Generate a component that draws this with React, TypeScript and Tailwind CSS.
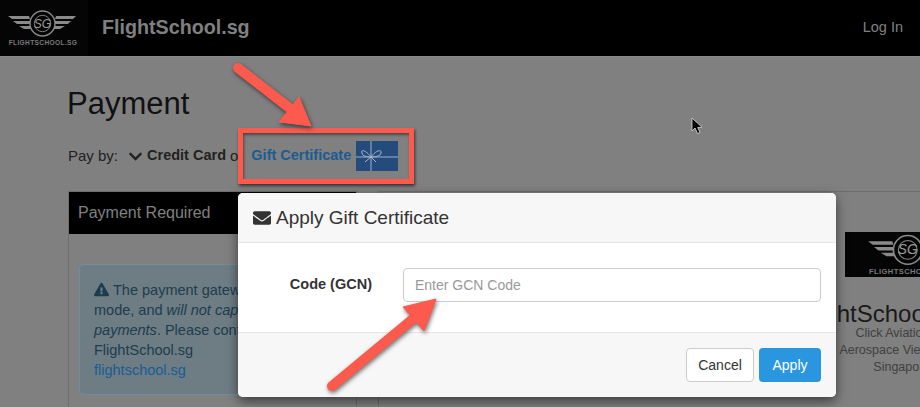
import { FaChevronDown, FaEnvelope, FaExclamationTriangle } from 'react-icons/fa';

function Logo({ className }: { className?: string }) {
  return (
    <svg viewBox="0 7 88 39" className={className}>
      <g fill="#8a8a8a">
        <path d="M8 15 H29 L30 18 H12 Z" />
        <path d="M13 20 H30 L30.5 23 H17 Z" />
        <path d="M19 25 H31 L33 28 H24 Z" />
        <path d="M76 15 H56 L55 18 H73 Z" />
        <path d="M71 20 H55 L54.5 23 H68 Z" />
        <path d="M65 25 H54 L52 28 H60 Z" />
      </g>
      <circle cx="42.5" cy="22.5" r="12.5" fill="#050505" stroke="#8a8a8a" strokeWidth="1.4" />
      <circle cx="42.5" cy="22.5" r="8.2" fill="none" stroke="#8a8a8a" strokeWidth="0.9" />
      <text x="42.5" y="26.5" textAnchor="middle" fontSize="12" fontStyle="italic" fill="#9a9a9a" fontFamily="Liberation Sans, sans-serif">SG</text>
      <text x="43" y="43.5" textAnchor="middle" fontSize="6.6" fontWeight="700" letterSpacing="0.35" fill="#7a7a7a" fontFamily="Liberation Sans, sans-serif">FLIGHTSCHOOL.SG</text>
    </svg>
  );
}

function GiftImage() {
  return (
    <svg viewBox="0 0 42 30" className="w-[42px] h-[30px] shrink-0">
      <rect width="42" height="30" fill="#254a7c" />
      <path d="M15 0 V30 M0 16 H42" stroke="#9fb0c8" strokeWidth="1" />
      <path d="M15 16 C10 9 4 8 6 12 C6 15 11 16 15 16 C20 9 26 8 25 12 C25 15 19 16 15 16 M15 16 L9 21 M15 16 L20 21" fill="none" stroke="#a9b4c4" strokeWidth="1" />
    </svg>
  );
}

function Annotations() {
  return (
    <>
      <div className="absolute left-[238px] top-[128px] w-[176px] h-[56px] border-[5px] border-[#fb5a4c] shadow-[1px_2px_3px_rgba(0,0,0,0.6),inset_1px_2px_3px_rgba(0,0,0,0.45)]" />
      <svg viewBox="0 0 920 407" className="absolute left-0 top-0 w-[920px] h-[407px] pointer-events-none drop-shadow-[1px_2px_2px_rgba(0,0,0,0.55)]">
        <g fill="#fb5a4c" stroke="#fb5a4c" strokeLinejoin="round">
          <path d="M238 68 L292 110" strokeWidth="10" strokeLinecap="round" fill="none" />
          <path d="M311 126 L299 97 L279 122 Z" strokeWidth="1" />
          <path d="M332 386 L414 318" strokeWidth="10" strokeLinecap="round" fill="none" />
          <path d="M436 299 L403 307 L424 331 Z" strokeWidth="1" />
        </g>
      </svg>
      <svg viewBox="0 0 12 17" className="absolute left-[691px] top-[117px] w-[12px] h-[17px]">
        <path d="M1 1 V14 L4 11 L6.5 16.5 L9 15.5 L6.7 10.5 L11 10.2 Z" fill="#000" stroke="#ddd" strokeWidth="0.8" />
      </svg>
    </>
  );
}

function GiftModal() {
  return (
    <div className="absolute left-[238px] top-[193px] w-[598px] h-[204px] flex flex-col rounded-[5px] overflow-hidden bg-white shadow-[0_4px_12px_rgba(0,0,0,0.55)]">
      <div className="h-[50px] shrink-0 flex items-center gap-[5px] pl-[15px] bg-[#f7f7f7] border-b border-[#e5e5e5] text-[#333]">
        <FaEnvelope className="w-[18px] h-[18px]" />
        <h4 className="text-[19px] leading-none">Apply Gift Certificate</h4>
      </div>
      <div className="flex-1 flex items-center px-[15px] pb-[5px]">
        <label className="w-[119px] text-right text-[14.5px] font-bold text-[#333]">Code (GCN)</label>
        <input
          placeholder="Enter GCN Code"
          className="ml-[31px] w-[418px] h-[34px] px-[11px] rounded-[4px] border border-[#ccc] bg-white text-[14px] placeholder:text-[#999] outline-none"
        />
      </div>
      <div className="h-[65px] shrink-0 flex items-center justify-end gap-[5px] pr-[15px] bg-[#f7f7f7] border-t border-[#e5e5e5]">
        <button className="w-[68px] h-[34px] rounded-[4px] border border-[#ccc] bg-white text-[14px] text-[#333]">Cancel</button>
        <button className="w-[62px] h-[34px] rounded-[4px] bg-[#2b96e0] text-[14px] text-white">Apply</button>
      </div>
    </div>
  );
}

export default function App() {
  return (
    <div className="relative w-[920px] h-[407px] overflow-hidden bg-[#808080] font-['Liberation_Sans',Arial,sans-serif]">
      {/* Navbar */}
      <nav className="h-[57px] flex items-center bg-black border-b border-[#8a8a8a] text-[#808080]">
        <div className="w-[88px] h-[56px] flex items-center bg-[#050505]">
          <Logo className="w-[88px] h-[39px] -mt-[2px]" />
        </div>
        <a className="ml-[14px] text-[19.7px] font-bold">FlightSchool.sg</a>
        <a className="ml-auto mr-[17px] text-[14.5px]">Log In</a>
      </nav>

      <main className="pl-[68px]">
        <h1 className="mt-[30px] -ml-[1px] text-[31px] leading-[33px] font-medium text-[#111]">Payment</h1>
        <div className="mt-[24px] h-[24px] flex items-center text-[15px] text-[#222] whitespace-nowrap">
          <span>Pay by:</span>
          <FaChevronDown className="ml-[10px] mr-[4px] w-[15px] h-[15px]" />
          <b className="text-[14.5px]">Credit Card</b>
          <span className="ml-1">or</span>
          <a className="ml-[8px] mr-[5px] text-[14.5px] font-bold text-[#1a5c92]">Gift Certificate</a>
          <GiftImage />
        </div>

        <div className="mt-[23px] flex gap-[21px] w-[880px]">
          {/* Left panel */}
          <section className="w-[289px] shrink-0 h-[300px] border border-[#6e6e6e]">
            <div className="h-[42px] flex items-center pl-[9px] bg-black text-[#808080] text-[16px]">Payment Required</div>
            <div className="mt-[30px] mx-[10px] h-[131px] px-[14px] pt-[15px] rounded-[4px] border border-[#6f8d9c] bg-[#6e7d84] text-[14.5px] leading-[20px] text-[#1d3c4e] whitespace-nowrap overflow-hidden">
              <FaExclamationTriangle className="inline-block w-[15px] h-[15px] mr-[4px] -mt-[3px]" />
              The payment gateway is in test
              <br />
              mode, and <i>will not capture</i>
              <br />
              <i>payments</i>. Please contact
              <br />
              FlightSchool.sg
              <br />
              <a className="text-[#1a5c92]">flightschool.sg</a>
            </div>
          </section>

          {/* Right panel */}
          <section className="w-[560px] shrink-0 h-[300px] border border-[#6e6e6e] border-r-0 pt-[40px] pl-[466px]">
            <div className="w-[130px] h-[45px] bg-[#050505]">
              <Logo className="w-[101px] h-[45px] ml-[14px]" />
            </div>
          </section>
        </div>
      </main>

      {/* Right panel text runs under the modal */}
      <div className="absolute left-[754px] top-[298px] w-[320px] text-center text-[#3f3f3f] whitespace-nowrap">
        <p className="pl-[44px] text-left text-[24px] leading-[32px] text-[#1a1a1a]">FlightSchool.sg</p>
        <p className="-mt-[5px] text-[12.5px] leading-[17px]">Click Aviation Pte Ltd</p>
        <p className="text-[12.5px] leading-[17px]">Aerospace View, #01-2345</p>
        <p className="text-[12.5px] leading-[17px]">Singapore 123</p>
      </div>

      <GiftModal />
      <Annotations />
    </div>
  );
}
